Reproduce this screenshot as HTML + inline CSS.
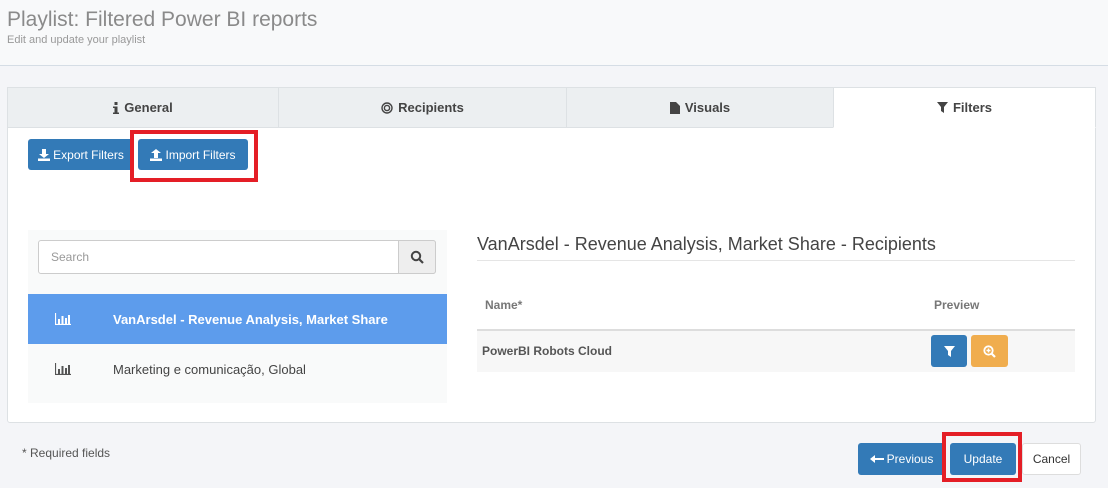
<!DOCTYPE html><html><head><style>
*{box-sizing:border-box;margin:0;padding:0}
body{width:1108px;height:488px;background:#f4f5f8;font-family:"Liberation Sans",sans-serif;position:relative;overflow:hidden;color:#555}
.a{position:absolute}
.btn{position:absolute;background:#337ab7;color:#fff;border-radius:3px;font-size:12px;display:flex;align-items:center;justify-content:center;gap:3px}
.tab{position:absolute;top:87px;height:41px;background:#eceff1;border:1px solid #dde1e4;display:flex;align-items:center;justify-content:center;font-size:13px;color:#444;font-weight:600;gap:5px}
</style></head><body>
<div class="a" style="left:0;top:0;width:1108px;height:66px;background:#f8f9fa;border-bottom:1px solid #d5dde5"></div>
<div class="a" style="left:7px;top:8px;font-size:21px;color:#8a8a8a">Playlist: Filtered Power BI reports</div>
<div class="a" style="left:7px;top:34px;font-size:11px;color:#999">Edit and update your playlist</div>
<div class="a" style="left:7px;top:87px;width:1089px;height:336px;background:#fff;border:1px solid #dde1e4;border-radius:3px"></div>
<div class="tab" style="left:7px;width:272px"><svg width="6" height="12"><rect x="1.5" y="0" width="3" height="3" fill="#444"/><path d="M0 4.5h4.5v6h1.5v1.5H0v-1.5h1.5v-4.5H0z" fill="#444"/></svg>General</div>
<div class="tab" style="left:278px;width:289px"><svg width="12" height="12"><circle cx="6" cy="6" r="5" fill="none" stroke="#444" stroke-width="1.4"/><circle cx="6" cy="6" r="2.6" fill="none" stroke="#444" stroke-width="1.4"/></svg>Recipients</div>
<div class="tab" style="left:566px;width:268px"><svg width="10" height="12"><path d="M0 0h6l4 4v8H0z" fill="#444"/></svg>Visuals</div>
<div class="tab" style="left:833px;width:263px;background:#fff;border-bottom-color:#fff"><svg width="11" height="11"><path d="M0 0h11L7 5v6L4 9V5z" fill="#444"/></svg>Filters</div>
<div class="btn" style="left:28px;top:139px;width:106px;height:31px"><svg width="12" height="12"><path d="M4 0h4v5h3L6 9 1 5h3z" fill="#fff"/><rect x="0" y="9.5" width="12" height="2.5" fill="#fff"/></svg>Export Filters</div>
<div class="btn" style="left:138px;top:139px;width:110px;height:31px"><svg width="12" height="12"><path d="M4 9h4V4h3L6 0 1 4h3z" fill="#fff"/><rect x="0" y="9.5" width="12" height="2.5" fill="#fff"/></svg>Import Filters</div>
<div class="a" style="left:130px;top:130px;width:128px;height:52px;border:4px solid #e41e26"></div>
<div class="a" style="left:28px;top:230px;width:419px;height:173px;background:#f9fafa"></div>
<div class="a" style="left:38px;top:240px;width:398px;height:34px;background:#fff;border:1px solid #ccc;border-radius:3px;font-size:12px;color:#999;padding:9px 12px">Search</div>
<div class="a" style="left:398px;top:240px;width:38px;height:34px;background:#eee;border:1px solid #ccc;border-radius:0 3px 3px 0;display:flex;align-items:center;justify-content:center"><svg width="14" height="14"><circle cx="6" cy="6" r="4.2" fill="none" stroke="#444" stroke-width="2"/><path d="M9 9l4 4" stroke="#444" stroke-width="2.2"/></svg></div>
<div class="a" style="left:28px;top:294px;width:419px;height:50px;background:#5d9cec"></div>
<svg class="a" style="left:55px;top:313px" width="16" height="12"><path d="M0.5 0v11.5H16" fill="none" stroke="#fff" stroke-width="1.2"/><rect x="3" y="6" width="2" height="5" fill="#fff"/><rect x="6.5" y="3" width="2" height="8" fill="#fff"/><rect x="10" y="5" width="2" height="6" fill="#fff"/><rect x="13" y="2" width="2" height="9" fill="#fff"/></svg>
<div class="a" style="left:113px;top:312px;font-size:13px;color:#fff;font-weight:bold">VanArsdel - Revenue Analysis, Market Share</div>
<svg class="a" style="left:55px;top:363px" width="16" height="12"><path d="M0.5 0v11.5H16" fill="none" stroke="#555" stroke-width="1.2"/><rect x="3" y="6" width="2" height="5" fill="#555"/><rect x="6.5" y="3" width="2" height="8" fill="#555"/><rect x="10" y="5" width="2" height="6" fill="#555"/><rect x="13" y="2" width="2" height="9" fill="#555"/></svg>
<div class="a" style="left:113px;top:362px;font-size:13px;color:#444">Marketing e comunicação, Global</div>
<div class="a" style="left:477px;top:234px;font-size:18px;color:#444">VanArsdel - Revenue Analysis, Market Share - Recipients</div>
<div class="a" style="left:477px;top:260px;width:598px;border-top:1px solid #e5e5e5"></div>
<div class="a" style="left:485px;top:298px;font-size:12px;color:#777;font-weight:bold">Name*</div>
<div class="a" style="left:934px;top:298px;font-size:12px;color:#777;font-weight:bold">Preview</div>
<div class="a" style="left:477px;top:329px;width:598px;height:43px;background:#f7f7f7;border-top:2px solid #ddd"></div>
<div class="a" style="left:482px;top:344px;font-size:12px;color:#555;font-weight:bold">PowerBI Robots Cloud</div>
<div class="btn" style="left:931px;top:335px;width:36px;height:32px"><svg width="11" height="11"><path d="M0 0h11L7 5v6L4 9V5z" fill="#fff"/></svg></div>
<div class="btn" style="left:971px;top:335px;width:37px;height:32px;background:#f0ad4e"><svg width="13" height="13"><circle cx="5.5" cy="5.5" r="4.2" fill="none" stroke="#fff" stroke-width="1.8"/><path d="M5.5 3.5v4M3.5 5.5h4" stroke="#fff" stroke-width="1.4"/><path d="M8.5 8.5l3.5 3.5" stroke="#fff" stroke-width="2.2"/></svg></div>
<div class="a" style="left:22px;top:446px;font-size:12px;color:#555">* Required fields</div>
<div class="btn" style="left:858px;top:443px;width:87px;height:32px"><svg width="14" height="8"><path d="M0 4l5-4v3h9v2H5v3z" fill="#fff"/></svg>Previous</div>
<div class="btn" style="left:950px;top:443px;width:66px;height:32px">Update</div>
<div class="a" style="left:942px;top:432px;width:80px;height:50px;border:4px solid #e41e26"></div>
<div class="a" style="left:1022px;top:443px;width:59px;height:32px;background:#fff;border:1px solid #ddd;border-radius:3px;font-size:12px;color:#333;display:flex;align-items:center;justify-content:center">Cancel</div>
</body></html>
